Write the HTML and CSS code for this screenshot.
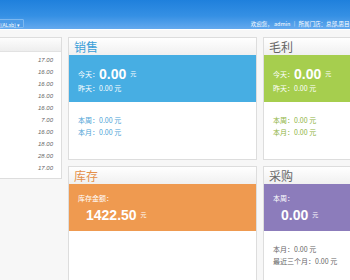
FILE: index.html
```html
<!DOCTYPE html>
<html lang="zh-CN">
<head>
  <meta charset="UTF-8" />
  <title>首页</title>
  <link rel="stylesheet" href="styles.css">
</head>
<body>
  <div class="topbar">
    <div class="topbar-nav">
      <span class="store-btn">思目(ALab) ▾</span>
      <span class="welcome">欢迎您， admin ｜ 所属门店：总部,思目(ALab)</span>
    </div>
  </div>

  <div class="main">
    <div class="side">
      <div class="side-head">员工提成</div>
      <ul class="side-list">
        <li><span>张小燕</span><em>17.00</em></li>
        <li><span>李明</span><em>16.00</em></li>
        <li><span>王芳</span><em>16.00</em></li>
        <li><span>赵丽</span><em>16.00</em></li>
        <li><span>陈静</span><em>16.00</em></li>
        <li><span>刘晓东 2016年日期:</span><em>7.00</em></li>
        <li><span>孙倩 门店销售报表</span><em>16.00</em></li>
        <li><span>周杰</span><em>18.00</em></li>
        <li><span>吴敏</span><em>28.00</em></li>
        <li><span>郑洁</span><em>17.00</em></li>
      </ul>
    </div>

    <div class="cards">
      <div class="card card-sale">
        <div class="card-title">销售</div>
        <div class="band">
          <div class="band-row">今天：<b class="num">0.00</b> <small>元</small></div>
          <div class="band-sub">昨天：0.00 元</div>
        </div>
        <div class="card-body">
          <div>本周：0.00 元</div>
          <div>本月：0.00 元</div>
        </div>
      </div>

      <div class="card card-profit">
        <div class="card-title">毛利</div>
        <div class="band">
          <div class="band-row">今天：<b class="num">0.00</b> <small>元</small></div>
          <div class="band-sub">昨天：0.00 元</div>
        </div>
        <div class="card-body">
          <div>本周：0.00 元</div>
          <div>本月：0.00 元</div>
        </div>
      </div>

      <div class="card card-stock">
        <div class="card-title">库存</div>
        <div class="band band-big">
          <div class="band-label">库存金额：</div>
          <div class="band-value"><b class="num">1422.50</b> <small>元</small></div>
        </div>
        <div class="card-body"></div>
      </div>

      <div class="card card-buy">
        <div class="card-title">采购</div>
        <div class="band band-big">
          <div class="band-label">本周：</div>
          <div class="band-value"><b class="num">0.00</b> <small>元</small></div>
        </div>
        <div class="card-body">
          <div>本月：0.00 元</div>
          <div>最近三个月：0.00 元</div>
        </div>
      </div>
    </div>
  </div>
</body>
</html>
```

FILE: styles.css
```css
body {
  margin: 0;
  width: 350px;
  height: 280px;
  overflow: hidden;
  background: #f7f7f7;
  font-family: "Noto Sans CJK SC", "Liberation Sans", sans-serif;
  color: #555;
}
.topbar {
  height: 30px;
  background: linear-gradient(#1f80dc, #3590e4 55%, #64a9ee);
  display: flex;
  flex-direction: column;
  justify-content: flex-end;
  border-bottom: 1px solid #fff;
  box-sizing: border-box;
}
.topbar-nav {
  height: 10px;
  display: flex;
  align-items: center;
  justify-content: space-between;
  margin-bottom: 1px;
}
.store-btn {
  margin-left: -28px;
  width: 52px;
  height: 9px;
  line-height: 9px;
  font-size: 5px;
  color: #fff;
  text-align: right;
  padding-right: 3px;
  box-sizing: border-box;
  background: #4d9ce8;
  border: 1px solid #7db8f0;
  border-radius: 1px;
}
.welcome {
  font-size: 5.5px;
  color: #fff;
  white-space: nowrap;
  margin-right: -16px;
  margin-top: 1px;
}
.main {
  display: flex;
  gap: 6px;
  padding-top: 7px;
}
.side {
  flex: none;
  width: 130px;
  margin-left: -68px;
  align-self: flex-start;
  background: #fff;
  border: 1px solid #ddd;
  box-sizing: border-box;
}
.side-head {
  height: 13px;
  line-height: 13px;
  font-size: 7px;
  padding-left: 6px;
  background: linear-gradient(#fdfdfd, #eeeeee);
  border-bottom: 1px solid #e2e2e2;
}
.side-list {
  list-style: none;
  margin: 0;
  padding: 2px 8px 4px 6px;
}
.side-list li {
  height: 12px;
  line-height: 12px;
  font-size: 6px;
  display: flex;
  justify-content: space-between;
  padding-left: 4px;
}
.side-list li:nth-child(6) span, .side-list li:nth-child(7) span {
  letter-spacing: 0.4px;
}
.side-list em {
  font-family: "Liberation Sans", sans-serif;
  font-style: italic;
  color: #666;
}
.cards {
  flex: none;
  display: grid;
  grid-template-columns: 189px 189px;
  gap: 6px;
}
.card {
  height: 123px;
  background: #fff;
  border: 1px solid #ddd;
  box-sizing: border-box;
}
.card-title {
  height: 17px;
  line-height: 17px;
  font-size: 12px;
  padding-left: 5px;
  background: linear-gradient(#ffffff, #f0f0f0);
  color: #666;
}
.band {
  height: 47px;
  padding: 10px 9px 0;
  box-sizing: border-box;
  color: #fff;
  font-size: 7px;
}
.band-row {
  height: 18px;
  line-height: 18px;
  display: flex;
  align-items: center;
}
.band-sub {
  line-height: 10px;
}
.num {
  font-family: "Liberation Sans", sans-serif;
  font-weight: bold;
  font-size: 14px;
  margin-right: 4px;
}
.band small {
  font-size: 6px;
}
.band-big {
  padding-top: 9px;
}
.band-label {
  line-height: 10px;
}
.band-value {
  margin-top: 4px;
  padding-left: 8px;
  line-height: 16px;
  display: flex;
  align-items: center;
}
.card-body {
  padding: 12px 9px 0;
  font-size: 7px;
}
.card-body div {
  line-height: 12px;
}
.card-sale .card-title { color: #3b9fd8; }
.card-sale .band { background: #47aee3; }
.card-sale .card-body { color: #4aa3d6; }
.card-profit .band { background: #a6ce4e; }
.card-profit .card-body { color: #8db43e; }
.card-stock .card-title { color: #e5904a; }
.card-stock .band { background: #ef9a50; }
.card-buy .band { background: #8c7cbb; }
.card-buy .card-body { color: #666; }
```
